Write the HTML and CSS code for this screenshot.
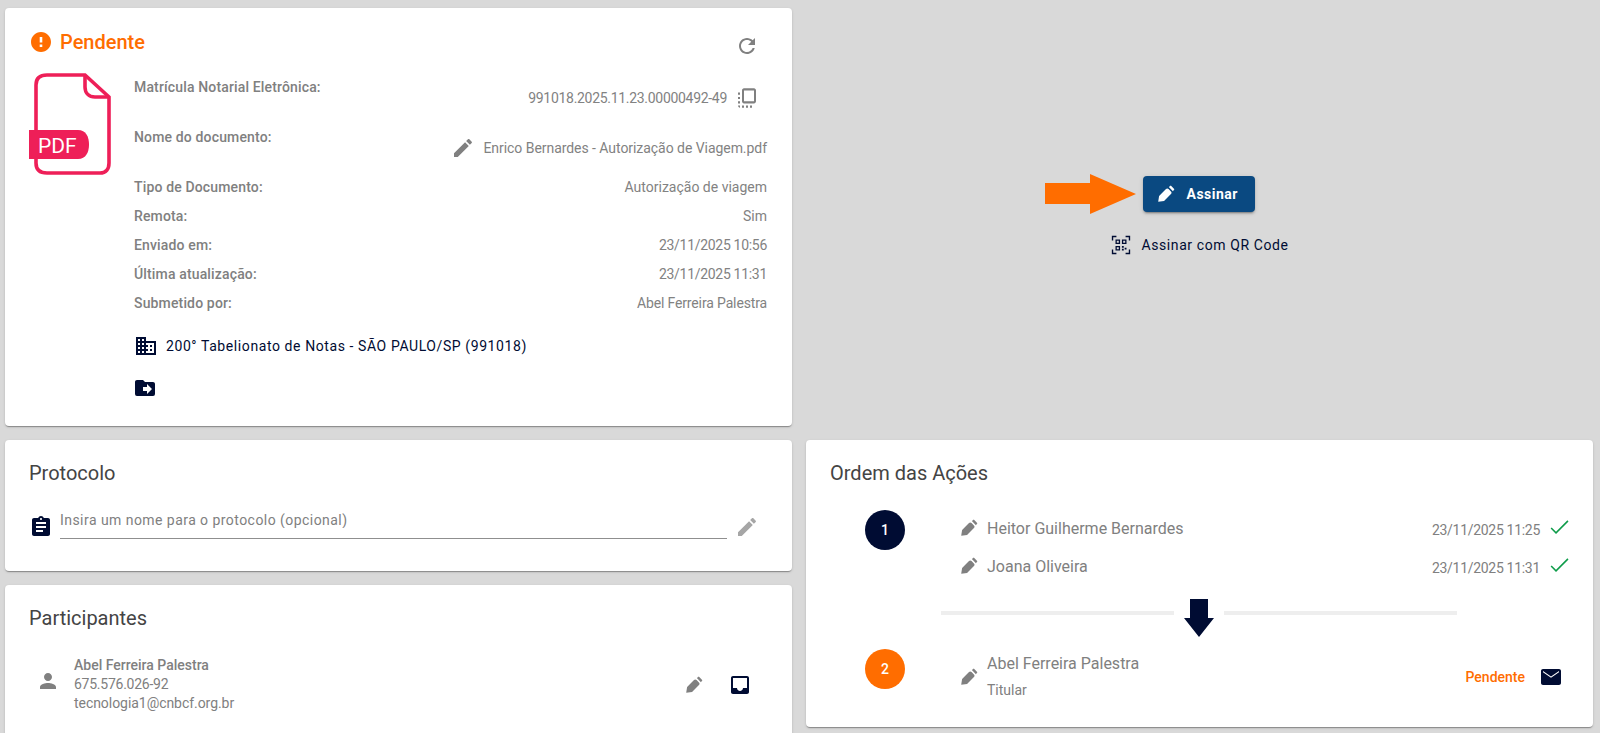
FILE: index.html
```html
<!DOCTYPE html>
<html lang="pt-BR">
<head>
    <meta charset="UTF-8">
    <meta name="viewport" content="width=device-width, initial-scale=1.0">
    <title>Documento</title>
    <link rel="stylesheet" href="styles.css">
</head>
<body>
    <svg class="icon-defs" aria-hidden="true">
        <symbol id="i-error" viewBox="0 0 24 24"><path d="M12 2C6.48 2 2 6.48 2 12s4.48 10 10 10 10-4.48 10-10S17.52 2 12 2zm1.3 15h-2.6v-2.4h2.6V17zm0-4.4h-2.6V7h2.6v5.6z"/></symbol>
        <symbol id="i-refresh" viewBox="0 0 24 24"><path d="M17.65 6.35C16.2 4.9 14.21 4 12 4c-4.42 0-7.99 3.58-7.99 8s3.57 8 7.99 8c3.73 0 6.84-2.55 7.73-6h-2.08c-.82 2.33-3.04 4-5.65 4-3.31 0-6-2.69-6-6s2.69-6 6-6c1.66 0 3.14.69 4.22 1.78L13 11h7V4l-2.35 2.35z"/></symbol>
        <symbol id="i-copy" viewBox="0 0 24 24" preserveAspectRatio="none"><path d="M3 13h2v-2H3v2zm0 4h2v-2H3v2zm2 4v-2H3c0 1.1.89 2 2 2zM3 9h2V7H3v2zm12 12h2v-2h-2v2zm4-18H9c-1.11 0-2 .9-2 2v10c0 1.1.89 2 2 2h10c1.1 0 2-.9 2-2V5c0-1.1-.9-2-2-2zm0 12H9V5h10v10zm-8 6h2v-2h-2v2zm-4 0h2v-2H7v2z"/></symbol>
        <symbol id="i-edit" viewBox="0 0 24 24"><path d="M3 17.25V21h3.75L17.81 9.94l-3.75-3.75L3 17.25zM20.71 7.04c.39-.39.39-1.02 0-1.41l-2.34-2.34c-.39-.39-1.02-.39-1.41 0l-1.83 1.83 3.75 3.75 1.83-1.83z"/></symbol>
        <symbol id="i-pen" viewBox="0 0 24 24"><path d="M1.6 22.4L2.800 14.600 12 5.400c1-1 2.400-1 3.400 0l3.200 3.200c1 1 1 2.400 0 3.400L9.400 21.200 1.600 22.400zM15.800 2.800L18.400.8l4.800 4.800-2 2.600-5.400-5.400z"/></symbol>
        <symbol id="i-domain" viewBox="0 0 24 24"><path d="M12 7V3H2v18h20V7H12zM6 19H4v-2h2v2zm0-4H4v-2h2v2zm0-4H4V9h2v2zm0-4H4V5h2v2zm4 12H8v-2h2v2zm0-4H8v-2h2v2zm0-4H8V9h2v2zm0-4H8V5h2v2zm10 12h-8v-2h2v-2h-2v-2h2v-2h-2V9h8v10zm-2-8h-2v2h2v-2zm0 4h-2v2h2v-2z"/></symbol>
        <symbol id="i-folder" viewBox="0 0 24 24"><path d="M14 18v-3h-4v-4h4V8l5 5M20 6h-8l-2-2H4c-1.11 0-2 .89-2 2v12a2 2 0 0 0 2 2h16a2 2 0 0 0 2-2V8c0-1.11-.9-2-2-2z"/></symbol>
        <symbol id="i-qr" viewBox="0 0 24 24"><path fill-rule="evenodd" d="M2 2h5v1.5H3.5V7H2zM17 2h5v5h-1.5V3.5H17zM2 17h1.5v3.5H7V22H2zM20.500 17H22v5h-5v-1.500h3.500zM6 6h5v5H6zM7.400 7.400v2.200h2.200V7.400zM13 6h5v5h-5zM14.400 7.400v2.200h2.200V7.400zM6 13h5v5H6zM7.400 14.400v2.200h2.200v-2.200zM13 13h2v2h-2zM16 15h2v2h-2zM13 16h2v2h-2z"/></symbol>
        <symbol id="i-clipboard" viewBox="0 0 24 24"><path d="M19 3h-4.180C14.400 1.840 13.300 1 12 1c-1.300 0-2.400.84-2.820 2H5c-1.100 0-2 .9-2 2v14c0 1.100.9 2 2 2h14c1.100 0 2-.9 2-2V5c0-1.100-.9-2-2-2zm-7 0c.55 0 1 .45 1 1s-.45 1-1 1-1-.45-1-1 .45-1 1-1zm2 14H7v-2h7v2zm3-4H7v-2h10v2zm0-4H7V7h10v2z"/></symbol>
        <symbol id="i-person" viewBox="0 0 24 24"><path d="M12 12c2.21 0 4-1.79 4-4s-1.79-4-4-4-4 1.79-4 4 1.79 4 4 4zm0 2c-2.67 0-8 1.34-8 4v2h16v-2c0-2.66-5.33-4-8-4z"/></symbol>
        <symbol id="i-inbox" viewBox="0 0 24 24"><path d="M19 3H4.990c-1.110 0-1.980.89-1.980 2L3 19c0 1.100.88 2 1.990 2H19c1.100 0 2-.9 2-2V5c0-1.110-.9-2-2-2zm0 12h-4c0 1.660-1.350 3-3 3s-3-1.340-3-3H4.990V5H19v10z"/></symbol>
        <symbol id="i-mail" viewBox="0 0 24 24"><path fill-rule="evenodd" d="M20 4H4c-1.100 0-2 .9-2 2v12c0 1.100.9 2 2 2h16c1.100 0 2-.9 2-2V6c0-1.100-.9-2-2-2zM20 7.200l-8 5.600-8-5.600V6l8 5.600L20 6z"/></symbol>
        <symbol id="i-check" viewBox="0 0 24 24"><path d="M9 18L3.600 12.600l1.100-1.100L9 15.800 20.400 4.300l1.100 1.100z"/></symbol>
    </svg>

    <div class="page">
        <!-- Documento -->
        <section class="card doc-card">
            <div class="status-row">
                <svg class="icon status-icon"><use href="#i-error"/></svg>
                <span class="status-text">Pendente</span>
                <svg class="icon refresh-icon"><use href="#i-refresh"/></svg>
            </div>
            <div class="doc-body">
                <svg class="pdf-icon" viewBox="0 0 84 102">
                    <path class="pdf-line" d="M56 2H18C10 2 7 6 7 12V90C7 96 10 100 18 100H71C77 100 80 96 80 90V24Z"/>
                    <path class="pdf-line" d="M56 2V14C56 20 60 24 66 24H80"/>
                    <path class="pdf-tag" d="M0 57H49C57 57 60 64 60 71.500C60 79 57 86 49 86H0Z"/>
                    <text class="pdf-text" x="9" y="80">PDF</text>
                </svg>
                <div class="doc-info">
                    <div class="info-row tall">
                        <span class="info-label">Matrícula Notarial Eletrônica:</span>
                        <span class="info-value with-icon num">
                            991018.2025.11.23.00000492-49
                            <svg class="icon copy-icon"><use href="#i-copy"/></svg>
                        </span>
                    </div>
                    <div class="info-row tall">
                        <span class="info-label">Nome do documento:</span>
                        <span class="info-value with-icon file-name">
                            <svg class="icon edit-icon"><use href="#i-edit"/></svg>
                            Enrico Bernardes - Autorização de Viagem.pdf
                        </span>
                    </div>
                    <div class="info-row">
                        <span class="info-label">Tipo de Documento:</span>
                        <span class="info-value">Autorização de viagem</span>
                    </div>
                    <div class="info-row">
                        <span class="info-label">Remota:</span>
                        <span class="info-value">Sim</span>
                    </div>
                    <div class="info-row">
                        <span class="info-label">Enviado em:</span>
                        <span class="info-value num">23/11/2025 10:56</span>
                    </div>
                    <div class="info-row">
                        <span class="info-label">Última atualização:</span>
                        <span class="info-value num">23/11/2025 11:31</span>
                    </div>
                    <div class="info-row">
                        <span class="info-label">Submetido por:</span>
                        <span class="info-value name-value">Abel Ferreira Palestra</span>
                    </div>
                    <div class="office-row">
                        <svg class="icon navy"><use href="#i-domain"/></svg>
                        <span>200° Tabelionato de Notas - SÃO PAULO/SP (991018)</span>
                    </div>
                    <div class="folder-row">
                        <svg class="icon navy"><use href="#i-folder"/></svg>
                    </div>
                </div>
            </div>
        </section>

        <!-- Assinar -->
        <section class="sign-panel">
            <div class="sign-btn-wrap">
                <svg class="sign-arrow" viewBox="0 0 91 40"><path d="M0 9H45V0L91 20L45 40V30H0Z"/></svg>
                <button class="sign-btn">
                    <svg class="icon white"><use href="#i-pen"/></svg>
                    Assinar
                </button>
            </div>
            <a class="qr-link">
                <svg class="icon navy"><use href="#i-qr"/></svg>
                Assinar com QR Code
            </a>
        </section>

        <div class="left-stack">
            <section class="card protocol-card">
                <h2 class="card-title">Protocolo</h2>
                <div class="protocol-row">
                    <svg class="icon navy"><use href="#i-clipboard"/></svg>
                    <input class="protocol-input" type="text" placeholder="Insira um nome para o protocolo (opcional)">
                    <svg class="icon light-edit"><use href="#i-edit"/></svg>
                </div>
            </section>

            <section class="card people-card">
                <h2 class="card-title">Participantes</h2>
                <div class="person-row">
                    <svg class="icon person-icon"><use href="#i-person"/></svg>
                    <div class="person-info">
                        <strong>Abel Ferreira Palestra</strong>
                        <span class="cpf">675.576.026-92</span>
                        <span class="email">tecnologia1@cnbcf.org.br</span>
                    </div>
                    <svg class="icon person-pen"><use href="#i-pen"/></svg>
                    <svg class="icon navy"><use href="#i-inbox"/></svg>
                </div>
            </section>
        </div>

        <!-- Ordem das acoes -->
        <section class="card order-card">
            <h2 class="card-title">Ordem das Ações</h2>
            <div class="step">
                <div class="step-num navy-bg">1</div>
                <div class="step-lines">
                    <div class="step-line">
                        <svg class="icon step-pen"><use href="#i-pen"/></svg>
                        <span class="step-name">Heitor Guilherme Bernardes</span>
                        <span class="step-date">23/11/2025 11:25</span>
                        <svg class="icon check-icon"><use href="#i-check"/></svg>
                    </div>
                    <div class="step-line">
                        <svg class="icon step-pen"><use href="#i-pen"/></svg>
                        <span class="step-name">Joana Oliveira</span>
                        <span class="step-date">23/11/2025 11:31</span>
                        <svg class="icon check-icon"><use href="#i-check"/></svg>
                    </div>
                </div>
            </div>
            <div class="step-divider">
                <span class="divider-bar"></span>
                <svg class="down-arrow" viewBox="0 0 30 38"><path d="M6 0H24V19H30L15 38L0 19H6Z"/></svg>
                <span class="divider-bar"></span>
            </div>
            <div class="step step-last">
                <div class="step-num orange-bg">2</div>
                <svg class="icon step-pen"><use href="#i-pen"/></svg>
                <div class="step-who">
                    <span class="step-name">Abel Ferreira Palestra</span>
                    <span class="step-role">Titular</span>
                </div>
                <span class="step-pending">Pendente</span>
                <svg class="icon navy"><use href="#i-mail"/></svg>
            </div>
        </section>
    </div>
</body>
</html>
```

FILE: styles.css
```css
* {
    box-sizing: border-box;
}

html, body {
    height: 100%;
}

body {
    margin: 0;
    overflow: hidden;
    background-color: #d9d9d9;
    color: #808080;
    font-family: Roboto, Arial, sans-serif;
    font-size: 14px;
}

.icon-defs {
    display: none;
}

.icon {
    width: 24px;
    height: 24px;
    flex-shrink: 0;
    fill: #808080;
}

.icon.navy {
    fill: #000c33;
}

.icon.white {
    fill: #fff;
}

.page {
    display: grid;
    grid-template-columns: 787px 787px;
    grid-template-rows: 418px auto;
    column-gap: 14px;
    row-gap: 14px;
    align-items: start;
    padding: 8px 0 0 5px;
}

.card {
    background-color: #fff;
    border-radius: 4px;
    box-shadow: 0 2px 1px -1px rgba(0, 0, 0, 0.2), 0 1px 1px 0 rgba(0, 0, 0, 0.14), 0 1px 3px 0 rgba(0, 0, 0, 0.12);
}

.card-title {
    margin: 0;
    font-size: 20px;
    font-weight: 400;
    line-height: 24px;
    color: #444;
}

/* Documento */
.doc-card {
    height: 418px;
    padding: 20px 25px 0 24px;
}

.status-row {
    display: flex;
    align-items: center;
    height: 28px;
}

.status-icon {
    fill: #ff6d00;
}

.status-text {
    margin-left: 7px;
    font-size: 20px;
    font-weight: 500;
    color: #ff6d00;
}

.refresh-icon {
    margin-left: auto;
    margin-top: 8px;
    margin-right: 8px;
}

.doc-body {
    display: flex;
    margin-top: 17px;
}

.pdf-icon {
    width: 84px;
    height: 102px;
    flex-shrink: 0;
}

.pdf-line {
    fill: none;
    stroke: #ee1f58;
    stroke-width: 3.6;
}

.pdf-tag {
    fill: #ee1f58;
}

.pdf-text {
    fill: #fff;
    font-family: Roboto, Arial, sans-serif;
    font-size: 21px;
}

.doc-info {
    flex: 1;
    margin-left: 21px;
    padding-top: 4px;
}

.info-row {
    display: flex;
    justify-content: space-between;
    align-items: flex-start;
    height: 29px;
    line-height: 20px;
}

.info-row.tall {
    height: 50px;
}

.info-label {
    font-weight: 500;
    letter-spacing: 0.15px;
}

.info-value {
    color: #828282;
}

.num {
    letter-spacing: -0.3px;
}

.name-value {
    letter-spacing: -0.14px;
}

.file-name {
    letter-spacing: -0.05px;
}

.with-icon {
    display: flex;
    align-items: center;
    margin-top: 9px;
    height: 24px;
}

.copy-icon {
    height: 26px;
    margin-left: 8px;
    margin-right: 8px;
}

.edit-icon {
    margin-right: 8px;
}

.office-row {
    display: flex;
    align-items: center;
    gap: 8px;
    margin-top: 12px;
    height: 24px;
    letter-spacing: 0.59px;
    color: #000c33;
}

.folder-row {
    display: flex;
    margin-top: 18px;
    margin-left: -1px;
}

/* Assinar */
.sign-panel {
    height: 418px;
    padding-bottom: 2px;
    display: flex;
    flex-direction: column;
    align-items: center;
    justify-content: center;
}

.sign-btn-wrap {
    position: relative;
    margin-right: 2px;
}

.sign-arrow {
    position: absolute;
    top: -2px;
    left: -98px;
    width: 91px;
    height: 40px;
    fill: #ff6d00;
}

.sign-btn {
    display: flex;
    align-items: center;
    gap: 12px;
    width: 112px;
    height: 36px;
    padding: 0 0 0 14px;
    border: none;
    border-radius: 4px;
    background-color: #0a4981;
    color: #fff;
    font-family: Roboto, Arial, sans-serif;
    font-size: 14px;
    font-weight: 700;
    letter-spacing: 0.5px;
    box-shadow: 0 3px 1px -2px rgba(0, 0, 0, 0.2), 0 2px 2px 0 rgba(0, 0, 0, 0.14), 0 1px 5px 0 rgba(0, 0, 0, 0.12);
}

.sign-btn .icon {
    width: 18px;
    height: 18px;
}

.qr-link {
    display: flex;
    align-items: center;
    gap: 9px;
    margin-top: 21px;
    height: 24px;
    letter-spacing: 0.6px;
    color: #000c33;
}

.qr-link .icon {
    width: 22px;
    height: 22px;
}

/* Coluna esquerda */
.left-stack {
    display: flex;
    flex-direction: column;
    gap: 14px;
}

.protocol-card {
    height: 131px;
    padding: 21px 24px 0;
}

.protocol-row {
    display: flex;
    align-items: center;
    margin-top: 25px;
}

.protocol-row .navy {
    margin-top: 5px;
}

.protocol-input {
    flex: 1;
    height: 29px;
    margin: 0 8px 0 7px;
    padding: 0 0 9px;
    border: none;
    border-bottom: 1px solid #8f8f8f;
    outline: none;
    font-family: Roboto, Arial, sans-serif;
    font-size: 14px;
    letter-spacing: 0.45px;
}

.protocol-input::placeholder {
    color: #808080;
    opacity: 1;
}

.light-edit {
    fill: #a6a6a6;
    margin-top: 5px;
    margin-right: 9px;
}

.people-card {
    height: 200px;
    padding: 21px 24px 0;
}

.person-row {
    display: flex;
    align-items: center;
    margin-top: 26px;
    padding-left: 7px;
}

.person-icon {
    margin-bottom: 8px;
}

.person-info {
    flex: 1;
    display: flex;
    flex-direction: column;
    margin-left: 14px;
    line-height: 19px;
}

.person-info strong {
    font-weight: 500;
}

.cpf {
    letter-spacing: -0.25px;
}

.email {
    letter-spacing: -0.05px;
}

.person-pen {
    width: 18px;
    height: 18px;
    margin-right: 25px;
}

.person-row .navy {
    margin-right: 16px;
}

/* Ordem */
.order-card {
    height: 287px;
    padding: 21px 24px 0;
}

.step {
    display: flex;
    align-items: flex-start;
    margin-top: 25px;
    padding-left: 35px;
}

.step-num {
    display: flex;
    align-items: center;
    justify-content: center;
    width: 40px;
    height: 40px;
    margin-right: 55px;
    border-radius: 50%;
    color: #fff;
    font-size: 14px;
    font-weight: 500;
    flex-shrink: 0;
}

.navy-bg {
    background-color: #000c33;
}

.orange-bg {
    background-color: #ff6d00;
}

.step-lines {
    flex: 1;
}

.step-line {
    display: flex;
    align-items: center;
    height: 38px;
    margin-top: -1px;
    margin-bottom: 1px;
}

.step-pen {
    width: 18px;
    height: 18px;
    margin-right: 9px;
}

.step-name {
    font-size: 16px;
}

.step-date {
    margin-left: auto;
    margin-top: 4px;
    letter-spacing: -0.3px;
}

.check-icon {
    fill: #0e9c4a;
    margin-left: 7px;
    margin-right: -2px;
}

.step-divider {
    display: flex;
    align-items: center;
    margin: 3px 0 0 111px;
    width: 516px;
    gap: 10px;
}

.divider-bar {
    flex: 1;
    height: 4px;
    background-color: #eee;
}

.down-arrow {
    width: 30px;
    height: 38px;
    margin-top: 10px;
    fill: #000c33;
}

.step-last {
    align-items: center;
    margin-top: 12px;
}

.step-last .step-num {
    margin-bottom: 16px;
}

.step-who {
    flex: 1;
    display: flex;
    flex-direction: column;
    gap: 7px;
}

.step-role {
    line-height: 20px;
}

.step-pending {
    margin-right: 14px;
    font-weight: 500;
    color: #ff6d00;
}

.step-last .navy {
    margin-right: 6px;
}
```
